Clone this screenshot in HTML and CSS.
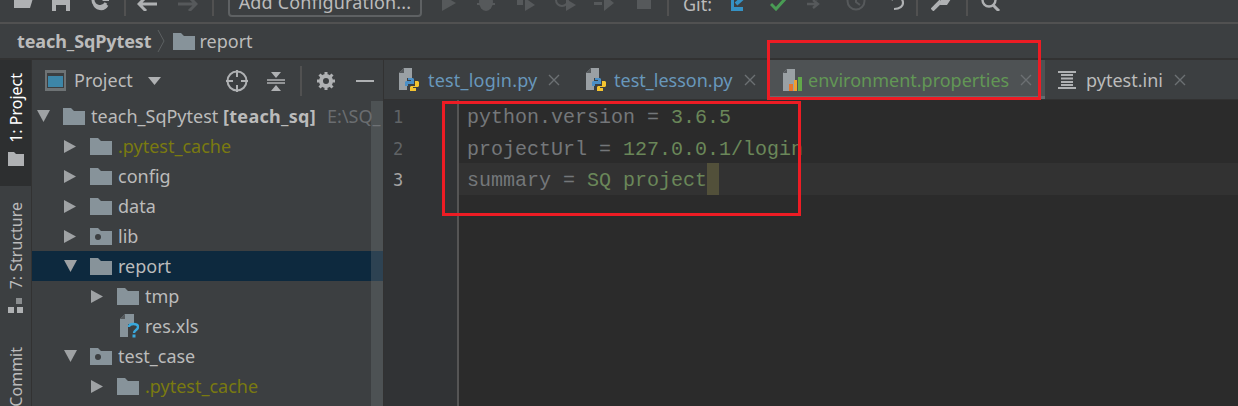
FILE: index.html
```html
<!DOCTYPE html>
<html lang="en">
<head>
<meta charset="utf-8">
<title>teach_SqPytest</title>
<link rel="stylesheet" href="styles.css">
</head>
<body>
<svg class="defs" width="0" height="0" aria-hidden="true">
  <defs>
    <symbol id="folder" viewBox="0 0 22 18"><path d="M0 1h8l3 3h11v14H0z" fill="#87939a"/></symbol>
    <symbol id="modfolder" viewBox="0 0 22 18"><path d="M0 1h8l3 3h11v14H0z" fill="#87939a"/><circle cx="8" cy="10" r="3" fill="#3c3f41"/></symbol>
    <symbol id="pyfile" viewBox="0 0 20 24"><path d="M5 0h8v10H8v12H0V5z" fill="#9aa0a4"/><path d="M0 5l5-5v5z" fill="#55595c"/><path d="M9 10h5l1 1v5H9v2H6v-4l1-1h5v-1H9z" fill="#4b8fc6"/><path d="M16 13h3l1 1v4l-1 1h-5v1h3v3h-6v-4l1-1h4z" fill="#f4c430"/></symbol>
    <symbol id="close" viewBox="0 0 12 12"><path d="M1 1l10 10M11 1L1 11" stroke="#6c7073" stroke-width="1.4" fill="none"/></symbol>
  </defs>
</svg>
<div class="app">
  <header class="toolbar">
    <svg class="ti m14" width="20" height="16" viewBox="0 0 20 16"><path d="M0 0h20l-4 13H0z" fill="#afb1b3"/></svg>
    <svg class="ti m18" width="18" height="18" viewBox="0 0 18 18"><path d="M0 0h18v18H0z" fill="#afb1b3"/><path d="M4 12h10v6H4z" fill="#3c3f41"/></svg>
    <svg class="ti m21" width="18" height="18" viewBox="0 0 18 18"><path d="M2 6a7 7 0 0 0 13 4M16 12a7 7 0 0 1-13-2" stroke="#afb1b3" stroke-width="3" fill="none"/><path d="M11 8h7V2z" fill="#afb1b3"/></svg>
    <i class="sep s15"></i>
    <svg class="ti m11" width="20" height="14" viewBox="0 0 20 14"><path d="M9 0L2 7l7 7M2 7h18" stroke="#afb1b3" stroke-width="3" fill="none"/></svg>
    <svg class="ti m21" width="20" height="14" viewBox="0 0 20 14"><path d="M11 0l7 7-7 7M18 7H0" stroke="#56595b" stroke-width="3" fill="none"/></svg>
    <i class="sep s14"></i>
    <div class="config">Add Configuration...</div>
    <svg class="ti m20" width="14" height="16" viewBox="0 0 14 16"><path d="M0 0l14 8-14 8z" fill="#56595b"/></svg>
    <svg class="ti m21" width="18" height="18" viewBox="0 0 18 18"><ellipse cx="9" cy="9" rx="7" ry="9" fill="#56595b"/><path d="M0 6h18M0 11h18" stroke="#56595b" stroke-width="2"/></svg>
    <svg class="ti m20" width="20" height="18" viewBox="0 0 20 18"><path d="M2 0h6v12H2z" fill="#56595b"/><path d="M10 5l10 7-10 6z" fill="#56595b"/></svg>
    <svg class="ti m19" width="22" height="18" viewBox="0 0 22 18"><circle cx="8" cy="7" r="6" stroke="#56595b" stroke-width="2" fill="none"/><path d="M12 6l10 6-10 6z" fill="#56595b"/></svg>
    <svg class="ti m18" width="20" height="18" viewBox="0 0 20 18"><path d="M0 2h8v3H0zM0 9h8v3H0z" fill="#56595b"/><path d="M10 2l10 8-10 8z" fill="#56595b"/></svg>
    <svg class="ti m23" width="14" height="16" viewBox="0 0 14 16"><path d="M0 0h14v14H0z" fill="#56595b"/></svg>
    <i class="sep s16"></i>
    <span class="git">Git:</span>
    <svg class="ti m19" width="14" height="16" viewBox="0 0 14 16"><path d="M14 1L5 9M1 3v11h11" stroke="#3592c4" stroke-width="4" fill="none"/></svg>
    <svg class="ti m25" width="16" height="13" viewBox="0 0 16 13"><path d="M1 6l5 5 9-10" stroke="#499c54" stroke-width="3" fill="none"/></svg>
    <svg class="ti m21" width="14" height="14" viewBox="0 0 14 14"><path d="M0 7h9M6 3l5 4-5 4M12 0l-3 3" stroke="#56595b" stroke-width="2.4" fill="none"/></svg>
    <svg class="ti m25" width="20" height="18" viewBox="0 0 20 18"><circle cx="10" cy="8" r="8.5" stroke="#56595b" stroke-width="2" fill="none"/><path d="M10 3v6l4 3" stroke="#56595b" stroke-width="2" fill="none"/></svg>
    <svg class="ti m22" width="16" height="16" viewBox="0 0 16 16"><path d="M1 1l4 4M5 2H3a5 5 0 0 1 5 0c5 0 7 3 7 6s-3 6-9 6" stroke="#afb1b3" stroke-width="2.2" fill="none"/></svg>
    <i class="sep s12"></i>
    <svg class="ti m13" width="20" height="18" viewBox="0 0 20 18"><path d="M1 17l9-9" stroke="#afb1b3" stroke-width="4"/><path d="M10 5l6-5h4l-4 4 3 3 1-1-4 6H9z" fill="#afb1b3"/></svg>
    <i class="sep s15"></i>
    <svg class="ti m13" width="20" height="18" viewBox="0 0 20 18"><circle cx="8" cy="7" r="6.5" stroke="#afb1b3" stroke-width="2.4" fill="none"/><path d="M12 12l6 6" stroke="#afb1b3" stroke-width="3"/></svg>
  </header>

  <nav class="crumbs">
    <b>teach_SqPytest</b>
    <svg class="chev" width="8" height="22" viewBox="0 0 8 22"><path d="M1 0l6 11-6 11" stroke="#5d6163" fill="none"/></svg>
    <svg class="crumb-folder" width="22" height="18"><use href="#folder"/></svg>
    <span>report</span>
  </nav>

  <div class="main">
    <aside class="rail">
      <div class="rail-item active"><span class="vtext">1: Project</span>
        <svg width="16" height="14" viewBox="0 0 16 14"><path d="M0 0h6l2 2h8v12H0z" fill="#afb1b3"/></svg></div>
      <div class="rail-item struct"><span class="vtext">7: Structure</span>
        <svg width="16" height="15" viewBox="0 0 16 15"><path d="M8 0h6v6H8z" fill="#8a8d8f"/><path d="M0 9h6v6H0zM9 9h6v6H9z" fill="#afb1b3"/></svg></div>
      <div class="rail-item commit"><span class="vtext">Commit</span></div>
    </aside>

    <section class="project">
      <div class="phead">
        <svg class="pico" width="21" height="21" viewBox="0 0 21 21"><path d="M0 0h21v21H0z" fill="#6e7375"/><path d="M2 3h17v15H2z" fill="#3c3f41"/><path d="M3 6h15v11H3z" fill="#3d86a8"/></svg>
        <span class="ptitle">Project</span>
        <svg class="tri" width="13" height="8" viewBox="0 0 13 8"><path d="M0 0h13L6.500 8z" fill="#afb1b3"/></svg>
        <svg class="locate" width="22" height="22" viewBox="0 0 22 22"><circle cx="11" cy="11" r="9.500" stroke="#afb1b3" stroke-width="2" fill="none"/><path d="M11 0v7M11 15v7M0 11h7M15 11h7" stroke="#afb1b3" stroke-width="2"/></svg>
        <svg class="collapse" width="18" height="20" viewBox="0 0 18 20"><path d="M0 9h18M0 12h18" stroke="#afb1b3" stroke-width="1.6"/><path d="M4 1h10L9 7zM4 20h10l-5-6z" fill="#afb1b3"/></svg>
        <i class="psep"></i>
        <svg class="gear" width="18" height="18" viewBox="0 0 18 18"><circle cx="9" cy="9" r="5" stroke="#afb1b3" stroke-width="4" fill="none"/><path d="M9 0v4M9 14v4M0 9h4M14 9h4M2.500 2.500l3 3M12.500 12.500l3 3M15.500 2.500l-3 3M5.500 12.500l-3 3" stroke="#afb1b3" stroke-width="3"/></svg>
        <i class="minus"></i>
      </div>
      <div class="tree">
        <div class="row l0"><svg class="arrow" width="13" height="12"><path d="M0 0h13L6.500 12z" fill="#9fa2a4"/></svg><svg class="ficon" width="22" height="18"><use href="#folder"/></svg><span>teach_SqPytest <b>[teach_sq]</b></span><em>E:\SQ_</em></div>
        <div class="row l1"><svg class="arrow" width="12" height="13"><path d="M0 0l12 6.500L0 13z" fill="#9fa2a4"/></svg><svg class="ficon" width="22" height="18"><use href="#folder"/></svg><span class="ignored">.pytest_cache</span></div>
        <div class="row l1"><svg class="arrow" width="12" height="13"><path d="M0 0l12 6.500L0 13z" fill="#9fa2a4"/></svg><svg class="ficon" width="22" height="18"><use href="#folder"/></svg><span>config</span></div>
        <div class="row l1"><svg class="arrow" width="12" height="13"><path d="M0 0l12 6.500L0 13z" fill="#9fa2a4"/></svg><svg class="ficon" width="22" height="18"><use href="#folder"/></svg><span>data</span></div>
        <div class="row l1"><svg class="arrow" width="12" height="13"><path d="M0 0l12 6.500L0 13z" fill="#9fa2a4"/></svg><svg class="ficon" width="22" height="18"><use href="#modfolder"/></svg><span>lib</span></div>
        <div class="row l1 selected"><svg class="arrow down" width="13" height="12"><path d="M0 0h13L6.500 12z" fill="#9fa2a4"/></svg><svg class="ficon" width="22" height="18"><use href="#folder"/></svg><span>report</span></div>
        <div class="row l2"><svg class="arrow" width="12" height="13"><path d="M0 0l12 6.500L0 13z" fill="#9fa2a4"/></svg><svg class="ficon" width="22" height="18"><use href="#folder"/></svg><span>tmp</span></div>
        <div class="row l2"><svg class="arrow hidden" width="12" height="13"></svg><svg class="ficon" width="22" height="24" viewBox="0 0 22 24"><path d="M8 0h9v10h-6v13H3V5z" fill="#87939a"/><path d="M3 5l5-5v5z" fill="#55595c"/><path d="M12 13c0-4 9-4 9 0 0 3-4 3-4 6" stroke="#3aa8dc" stroke-width="2.400" fill="none"/><path d="M15.500 20.500h3v3h-3z" fill="#3aa8dc"/></svg><span>res.xls</span></div>
        <div class="row l1"><svg class="arrow down" width="13" height="12"><path d="M0 0h13L6.500 12z" fill="#9fa2a4"/></svg><svg class="ficon" width="22" height="18"><use href="#modfolder"/></svg><span>test_case</span></div>
        <div class="row l2"><svg class="arrow" width="12" height="13"><path d="M0 0l12 6.500L0 13z" fill="#9fa2a4"/></svg><svg class="ficon" width="22" height="18"><use href="#folder"/></svg><span class="ignored">.pytest_cache</span></div>
        <div class="scroll"></div>
      </div>
    </section>

    <section class="editor">
      <div class="tabs">
        <div class="tab t1"><svg width="20" height="24"><use href="#pyfile"/></svg><span class="mod">test_login.py</span><svg class="x" width="12" height="12"><use href="#close"/></svg></div>
        <div class="tab t2"><svg width="20" height="24"><use href="#pyfile"/></svg><span class="mod">test_lesson.py</span><svg class="x" width="12" height="12"><use href="#close"/></svg></div>
        <div class="tab t3 current"><svg width="21" height="24" viewBox="0 0 21 24"><path d="M5 1h8v22H1V5z" fill="#9aa0a4"/><path d="M1 5l4-4v4z" fill="#55595c"/><path d="M7 16h4v7H7z" fill="#e8742c"/><path d="M12 12h3v11h-3z" fill="#f0a030"/><path d="M16 9h4v14h-4z" fill="#62a84a"/></svg><span class="added">environment.properties</span><svg class="x" width="12" height="12"><use href="#close"/></svg></div>
        <div class="tab t4"><svg width="18" height="18" viewBox="0 0 18 18"><path d="M0 0h18v2H0zM0 16h18v2H0z" fill="#afb1b3"/><path d="M3 3h12v2H3zM3 6.500h12v2H3zM3 10h12v2H3zM3 13h12v2H3z" fill="#afb1b3"/></svg><span>pytest.ini</span><svg class="x" width="12" height="12"><use href="#close"/></svg></div>
      </div>
      <div class="body">
        <div class="gutter">
          <div class="ln">1</div>
          <div class="ln">2</div>
          <div class="ln now">3</div>
        </div>
        <div class="code">
          <div class="line"><span class="k">python.version = </span><span class="v">3.6.5</span></div>
          <div class="line"><span class="k">projectUrl = </span><span class="v">127.0.0.1/login</span></div>
          <div class="line caretline"><span class="k">summary = </span><span class="v">SQ project</span><span class="caret"></span></div>
        </div>
      </div>
    </section>
  </div>

  <div class="mark mark-tab"></div>
  <div class="mark mark-code"></div>
</div>
</body>
</html>
```

FILE: styles.css
```css
* { box-sizing: border-box; }
html, body { margin: 0; height: 100%; }
body { overflow: hidden; background: #3c3f41; color: #bbbbbb; font-family: "Noto Sans", "Open Sans", sans-serif; font-size: 18px; }
.defs { position: absolute; }
.app { position: relative; width: 1238px; height: 406px; overflow: hidden; display: flex; flex-direction: column; }

.toolbar { height: 24px; flex: none; display: flex; align-items: flex-end; overflow: hidden; border-bottom: 2px solid #515151; }
.ti { flex: none; margin-bottom: 11px; }
.ti.m11 { margin-left: 11px; } .ti.m13 { margin-left: 13px; } .ti.m14 { margin-left: 14px; }
.ti.m18 { margin-left: 18px; } .ti.m19 { margin-left: 19px; } .ti.m20 { margin-left: 20px; }
.ti.m21 { margin-left: 21px; } .ti.m22 { margin-left: 22px; } .ti.m23 { margin-left: 23px; } .ti.m25 { margin-left: 25px; }
.sep { flex: none; width: 2px; height: 16px; margin-bottom: 6px; background: #515151; }
.sep.s12 { margin-left: 12px; } .sep.s14 { margin-left: 14px; } .sep.s15 { margin-left: 15px; } .sep.s16 { margin-left: 16px; }
.config { flex: none; margin: 0 0 5px 14px; width: 194px; height: 30px; border: 2px solid #5e6163; border-radius: 4px; text-align: center; line-height: 27px; font-size: 18px; letter-spacing: .15px; color: #bbbbbb; white-space: nowrap; }
.git { flex: none; margin: 0 0 9px 14px; font-size: 18px; line-height: 18px; }

.crumbs { height: 36px; flex: none; display: flex; align-items: center; padding-left: 17px; border-bottom: 2px solid #323232; font-size: 18px; }
.crumbs b { font-weight: 700; letter-spacing: -.1px; }
.chev { margin-left: 6px; }
.crumb-folder { margin-left: 8px; margin-right: 4px; }

.main { flex: 1; display: flex; min-height: 0; }

.rail { width: 32px; flex: none; border-right: 1px solid #323232; display: flex; flex-direction: column; align-items: center; font-size: 16px; overflow: hidden; }
.rail-item { width: 100%; flex: none; display: flex; flex-direction: column; align-items: center; gap: 9px; color: #bbbbbb; }
.rail-item.active { height: 126px; padding-top: 13px; background: #2d2f30; color: #ffffff; }
.rail-item.struct { margin-top: 16px; }
.rail-item.commit { margin-top: 34px; }
.vtext { writing-mode: vertical-rl; transform: rotate(180deg); line-height: 20px; white-space: nowrap; }

.project { width: 352px; flex: none; display: flex; flex-direction: column; border-right: 1px solid #323232; }
.phead { height: 41px; flex: none; display: flex; align-items: center; padding-left: 13px; }
.pico { flex: none; }
.ptitle { margin: -1px 0 0 8px; width: 60px; }
.tri { margin-left: 14px; flex: none; }
.locate { margin-left: 65px; flex: none; }
.collapse { margin-left: 19px; flex: none; }
.psep { flex: none; width: 2px; height: 30px; background: #515151; margin-left: 15px; }
.gear { margin-left: 15px; flex: none; }
.minus { flex: none; width: 18px; height: 2px; background: #afb1b3; margin-left: 21px; }

.tree { position: relative; flex: 1; min-height: 0; overflow: hidden; }
.row { height: 30px; display: flex; align-items: center; white-space: nowrap; overflow: hidden; }
.row.l0 { padding-left: 5px; }
.row.l1 { padding-left: 32px; }
.row.l2 { padding-left: 59px; }
.row.selected { background: #0d293e; }
.arrow { flex: none; }
.arrow.down { margin-right: -1px; }
.arrow + .ficon { margin-left: 14px; }
.row.l0 .ficon { margin-left: 13px; }
.ficon { flex: none; margin-right: 6px; }
.row b { font-weight: 700; letter-spacing: .3px; }
.row em { font-style: normal; color: #6a6d70; margin-left: 11px; }
.ignored { color: #7a7a10; }
.scroll { position: absolute; right: 0; top: 0; bottom: 0; width: 12px; background: rgba(120, 125, 130, .3); }

.editor { flex: 1; min-width: 0; display: flex; flex-direction: column; }
.tabs { height: 40px; flex: none; display: flex; border-bottom: 1px solid #323232; white-space: nowrap; }
.tab { display: flex; align-items: center; height: 39px; padding-left: 15px; }
.tab .x { flex: none; margin-left: 11px; }
.tab span { margin-left: 8px; }
.t1 { width: 188px; }
.t1 span { margin-left: 9px; letter-spacing: .2px; }
.t2 { width: 195px; padding-left: 14px; }
.t3 { width: 278px; padding-left: 15px; padding-top: 3px; }
.t4 { padding-left: 13px; }
.t3 span { margin-left: 5px; }
.t4 span { margin-left: 10px; }
.current { background: #4e5254; border-bottom: 3px solid #646b6f; }
.mod { color: #6897bb; }
.added { color: #629755; }

.body { flex: 1; min-height: 0; display: flex; background: #2b2b2b; }
.gutter { width: 75px; flex: none; background: #313335; border-right: 2px solid #555555; padding-left: 9px; font-family: "DejaVu Sans Mono", monospace; font-size: 17px; color: #606366; }
.ln { height: 31.5px; line-height: 35px; }
.ln.now { color: #a4a3a3; }
.code { flex: 1; font-family: "Liberation Mono", monospace; font-size: 20px; }
.line { height: 31.5px; line-height: 35px; padding-left: 8px; white-space: nowrap; }
.caretline { background: #323232; display: flex; }
.k { color: #74777a; white-space: pre; }
.v { color: #6a8759; white-space: pre; }
.caret { display: inline-block; width: 12px; height: 32px; background: #52503a; }

.mark { position: absolute; border: 3px solid #ed1c24; pointer-events: none; }
.mark-tab { left: 767px; top: 40px; width: 274px; height: 60px; }
.mark-code { left: 442px; top: 101px; width: 359px; height: 115px; }
```
